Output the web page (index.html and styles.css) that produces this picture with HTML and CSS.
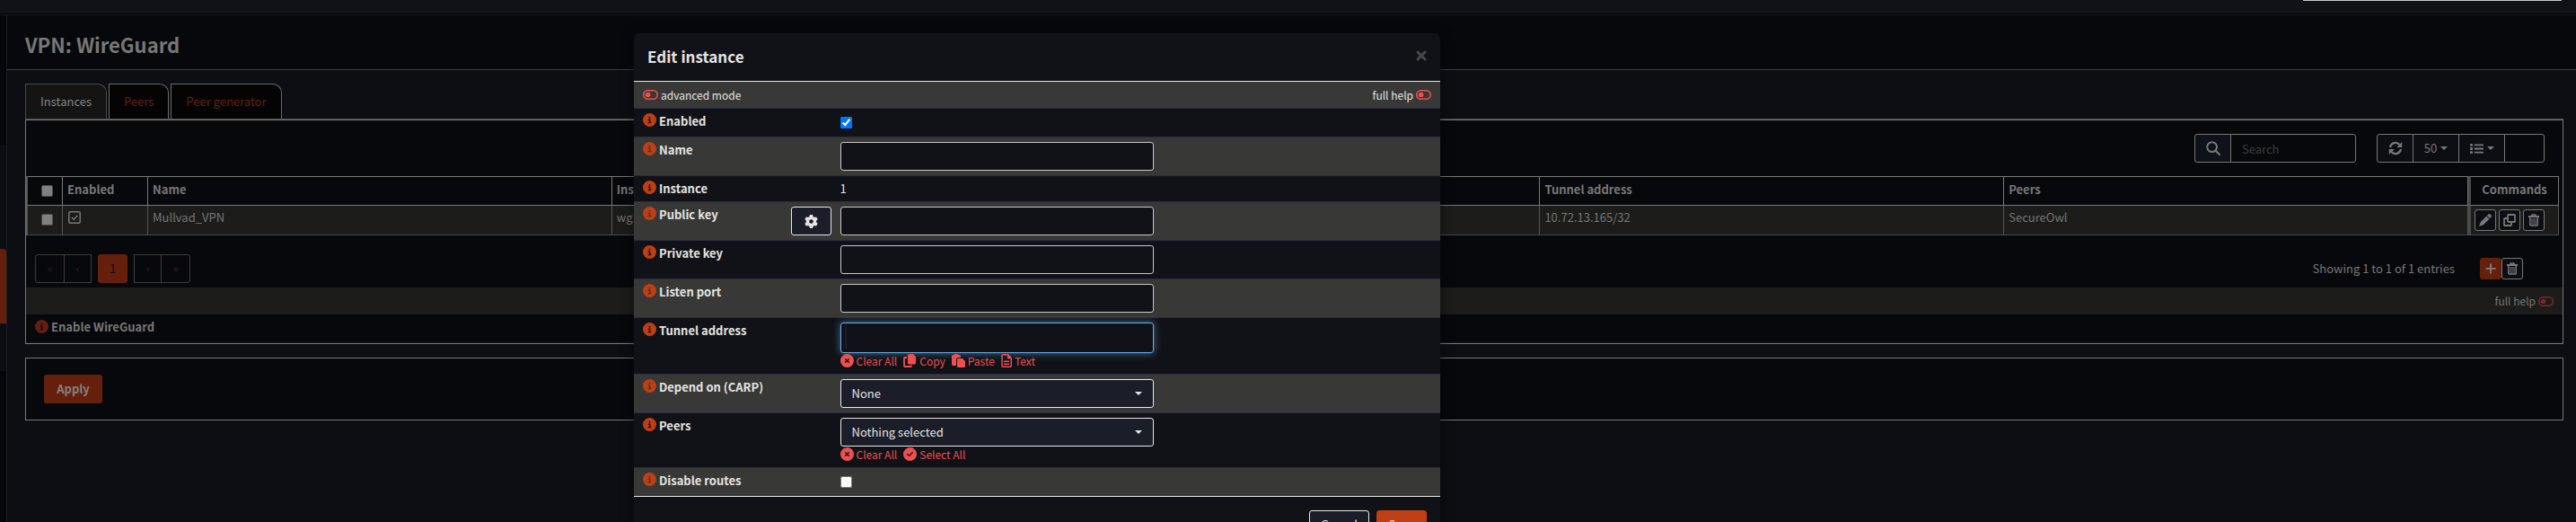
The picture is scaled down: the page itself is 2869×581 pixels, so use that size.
FILE: index.html
```html
<!DOCTYPE html>
<html lang="en">
<head>
<meta charset="utf-8">
<title>VPN: WireGuard</title>
<link rel="stylesheet" href="styles.css">
</head>
<body>
<svg class="sprite" aria-hidden="true">
  <symbol id="info" viewBox="0 0 512 512"><path d="M256 512A256 256 0 1 0 256 0a256 256 0 1 0 0 512zM216 336h24V272H216c-13.3 0-24-10.7-24-24s10.7-24 24-24h48c13.3 0 24 10.7 24 24v88h8c13.3 0 24 10.7 24 24s-10.7 24-24 24H216c-13.3 0-24-10.7-24-24s10.7-24 24-24zm40-208a32 32 0 1 1 0 64 32 32 0 1 1 0-64z"/></symbol>
  <symbol id="xmark" viewBox="0 0 512 512"><path d="M256 512A256 256 0 1 0 256 0a256 256 0 1 0 0 512zM175 175c9.4-9.4 24.6-9.4 33.9 0l47 47 47-47c9.4-9.4 24.6-9.4 33.9 0s9.4 24.6 0 33.9l-47 47 47 47c9.4 9.4 9.4 24.6 0 33.9s-24.6 9.4-33.9 0l-47-47-47 47c-9.4 9.4-24.6 9.4-33.9 0s-9.4-24.6 0-33.9l47-47-47-47c-9.4-9.4-9.4-24.6 0-33.9z"/></symbol>
  <symbol id="check" viewBox="0 0 512 512"><path d="M256 512A256 256 0 1 0 256 0a256 256 0 1 0 0 512zM369 209L241 337c-9.4 9.4-24.6 9.4-33.9 0l-64-64c-9.4-9.4-9.4-24.6 0-33.9s24.6-9.4 33.9 0l47 47L335 175c9.4-9.4 24.6-9.4 33.9 0s9.4 24.6 0 33.9z"/></symbol>
  <symbol id="gear" viewBox="0 0 512 512"><path d="M495.9 166.6c3.2 8.7 .5 18.4-6.4 24.6l-43.3 39.4c1.1 8.3 1.7 16.8 1.7 25.4s-.6 17.1-1.7 25.4l43.3 39.4c6.9 6.2 9.6 15.9 6.4 24.6c-4.4 11.9-9.7 23.3-15.8 34.3l-4.7 8.1c-6.6 11-14 21.4-22.1 31.2c-5.9 7.2-15.7 9.6-24.5 6.8l-55.7-17.7c-13.4 10.3-28.2 18.9-44 25.4l-12.5 57.1c-2 9.1-9 16.3-18.2 17.8c-13.8 2.3-28 3.5-42.5 3.5s-28.7-1.2-42.5-3.5c-9.2-1.5-16.2-8.7-18.2-17.8l-12.5-57.1c-15.8-6.5-30.6-15.1-44-25.4L83.1 425.9c-8.8 2.8-18.6 .3-24.5-6.8c-8.1-9.8-15.5-20.2-22.1-31.2l-4.7-8.1c-6.1-11-11.4-22.4-15.8-34.3c-3.2-8.7-.5-18.4 6.4-24.6l43.3-39.4C64.6 273.1 64 264.6 64 256s.6-17.1 1.7-25.4L22.4 191.2c-6.9-6.2-9.6-15.9-6.4-24.6c4.4-11.9 9.7-23.3 15.8-34.3l4.7-8.1c6.6-11 14-21.4 22.1-31.2c5.9-7.2 15.7-9.6 24.5-6.8l55.7 17.7c13.4-10.3 28.2-18.9 44-25.4l12.5-57.1c2-9.1 9-16.3 18.2-17.8C227.3 1.2 241.5 0 256 0s28.7 1.2 42.5 3.5c9.2 1.5 16.2 8.7 18.2 17.8l12.5 57.1c15.8 6.5 30.6 15.1 44 25.4l55.7-17.7c8.8-2.8 18.6-.3 24.5 6.8c8.1 9.8 15.5 20.2 22.1 31.2l4.7 8.1c6.1 11 11.4 22.4 15.8 34.3zM256 336a80 80 0 1 0 0-160 80 80 0 1 0 0 160z"/></symbol>
  <symbol id="toggle" viewBox="0 0 17 11"><rect x="0.8" y="0.8" width="15.4" height="9.4" rx="4.7" fill="none" stroke="currentColor" stroke-width="1.6"/><circle cx="5.6" cy="5.5" r="2.8"/></symbol>
  <symbol id="copy" viewBox="0 0 15 15"><path d="M6.5 0H11l3 3v7a1.5 1.5 0 0 1-1.500 1.500h-6A1.500 1.500 0 0 1 5 10V1.500A1.500 1.500 0 0 1 6.500 0z"/><path d="M4 4H1.800a.8.8 0 0 0-.8.8v8.400a.8.8 0 0 0 .8.8h6.400a.8.8 0 0 0 .8-.8V12.500" fill="none" stroke="currentColor" stroke-width="1.800"/></symbol>
  <symbol id="paste" viewBox="0 0 15 15"><path d="M1.500 1H3a2 2 0 0 1 4 0h1.500A1.500 1.500 0 0 1 10 2.500V4H7a2 2 0 0 0-2 2v7H1.500A1.500 1.500 0 0 1 0 11.500v-9A1.500 1.500 0 0 1 1.500 1z"/><path d="M7.300 5H12l3 3v5.500a1.500 1.500 0 0 1-1.500 1.500H7.300A1.300 1.300 0 0 1 6 13.700V6.300A1.300 1.300 0 0 1 7.300 5z"/></symbol>
  <symbol id="file" viewBox="0 0 12 15"><path d="M2 .8h5.500l3.700 3.700v8.700a1 1 0 0 1-1 1H2a1 1 0 0 1-1-1V1.800a1 1 0 0 1 1-1z" fill="none" stroke="currentColor" stroke-width="1.500"/><path d="M7 .8h1l3.500 3.500v1H7zM3 7.500h6V9H3zM3 10.500h6V12H3z"/></symbol>
  <symbol id="search" viewBox="0 0 16 16"><circle cx="6.600" cy="6.600" r="5.400" fill="none" stroke="currentColor" stroke-width="2"/><path d="M10.500 10.500l4.500 4.500" stroke="currentColor" stroke-width="2.200" stroke-linecap="round"/></symbol>
  <symbol id="refresh" viewBox="0 0 16 16"><path d="M2 7a6 6 0 0 1 10.600-2.800M14 9a6 6 0 0 1-10.600 2.800" fill="none" stroke="currentColor" stroke-width="2.200"/><path d="M15.200 1v6H9.200zM.8 15V9h6z"/></symbol>
  <symbol id="list" viewBox="0 0 16 14"><path d="M0 1h3v3H0zM5 1.500h11v2H5zM0 5.500h3v3H0zM5 6h11v2H5zM0 10h3v3H0zM5 10.500h11v2H5z"/></symbol>
  <symbol id="pencil" viewBox="0 0 14 14"><path d="M10.300.6a1.500 1.500 0 0 1 2.100 0l1 1a1.500 1.500 0 0 1 0 2.100l-1.300 1.300-3.100-3.100zM8.300 2.600l3.100 3.100-6.500 6.500L0 14l1.800-4.900z"/></symbol>
  <symbol id="clone" viewBox="0 0 14 14"><path d="M5.800 1h6.400a.8.8 0 0 1 .8.8v6.400a.8.8 0 0 1-.8.8H5.800a.8.8 0 0 1-.8-.8V1.800a.8.8 0 0 1 .8-.8zM4.500 5H1.800a.8.8 0 0 0-.8.8v6.400a.8.8 0 0 0 .8.8h6.400a.8.8 0 0 0 .8-.8V9.500" fill="none" stroke="currentColor" stroke-width="1.800"/></symbol>
  <symbol id="trash" viewBox="0 0 12 14"><path d="M1.800 3.500v8.700a.9.9 0 0 0 .9.9h6.600a.9.9 0 0 0 .9-.9V3.500M3.500 2.500L4.200.9h3.600l.7 1.600" fill="none" stroke="currentColor" stroke-width="1.500"/><path d="M0 2h12v2H0zM3.500 5h1v7h-1zM5.500 5h1v7h-1zM7.500 5h1v7h-1z"/></symbol>
  <symbol id="tick" viewBox="0 0 14 14"><rect x=".8" y=".8" width="12.400" height="12.400" rx="1.500" fill="none" stroke="currentColor" stroke-width="1.500"/><path d="M4 7l2.200 2.200L10.200 5" fill="none" stroke="currentColor" stroke-width="1.600"/></symbol>
  <symbol id="plus" viewBox="0 0 12 12"><path d="M5 .5h2V5h4.500v2H7v4.500H5V7H.5V5H5z"/></symbol>
  <symbol id="close" viewBox="0 0 12 12"><path d="M2 2l8 8M10 2l-8 8" stroke="currentColor" stroke-width="3" stroke-linecap="round"/></symbol>
</svg>

<header class="topbar"><div class="topbar-search"></div></header>
<div class="layout">
  <nav class="sidebar"><span class="side-group"></span><span class="side-active"></span><span class="side-rest"></span></nav>
  <main class="page">
    <div class="page-head"><h1>VPN: WireGuard</h1></div>
    <div class="content">
      <nav class="tabs">
        <a class="tab tab-on" href="#instances">Instances</a>
        <a class="tab" href="#peers">Peers</a>
        <a class="tab" href="#generator">Peer generator</a>
      </nav>
      <section class="box">
        <div class="toolbar">
          <div class="group">
            <span class="addon"><svg class="i16"><use href="#search"/></svg></span>
            <input class="search" type="text" placeholder="Search" aria-label="Search">
          </div>
          <div class="group">
            <button class="tool tool-s" aria-label="Refresh"><svg class="i16"><use href="#refresh"/></svg></button>
            <button class="tool tool-m">50<span class="caret"></span></button>
            <button class="tool tool-m" aria-label="Columns"><svg class="list"><use href="#list"/></svg><span class="caret"></span></button>
            <button class="tool tool-l" aria-label="More"></button>
          </div>
        </div>
        <table class="grid">
          <thead><tr>
            <th class="c-pick"><input class="pick" type="checkbox" aria-label="Select all rows"></th>
            <th class="c-on">Enabled</th><th>Name</th><th>Instance</th><th>Device</th><th>Tunnel address</th><th>Peers</th>
            <th class="c-cmd">Commands</th>
          </tr></thead>
          <tbody><tr>
            <td class="c-pick"><input class="pick" type="checkbox" aria-label="Select row"></td>
            <td><svg class="i14"><use href="#tick"/></svg></td><td>Mullvad_VPN</td><td>wg1</td><td></td><td>10.72.13.165/32</td><td>SecureOwl</td>
            <td class="c-cmd"><div class="cmds">
              <button class="mini" aria-label="Edit"><svg class="i14"><use href="#pencil"/></svg></button>
              <button class="mini" aria-label="Clone"><svg class="i14"><use href="#clone"/></svg></button>
              <button class="mini" aria-label="Delete"><svg class="trash"><use href="#trash"/></svg></button>
            </div></td>
          </tr></tbody>
        </table>
        <div class="foot">
          <div class="pager">
            <div class="group"><button class="pg pg-w">«</button><button class="pg">‹</button></div>
            <button class="pg pg-on">1</button>
            <div class="group"><button class="pg">›</button><button class="pg pg-w">»</button></div>
          </div>
          <div class="foot-right">
            <span>Showing 1 to 1 of 1 entries</span>
            <div class="adds">
              <button class="mini add" aria-label="Add"><svg class="i12"><use href="#plus"/></svg></button>
              <button class="mini" aria-label="Delete selected"><svg class="trash"><use href="#trash"/></svg></button>
            </div>
          </div>
        </div>
        <div class="band band-end"><small>full help</small><svg class="toggle"><use href="#toggle"/></svg></div>
        <div class="enable"><svg class="info"><use href="#info"/></svg><b>Enable WireGuard</b></div>
      </section>
      <section class="box apply-box"><button class="apply">Apply</button></section>
    </div>
  </main>
</div>

<form class="modal" role="dialog" aria-label="Edit instance">
  <div class="modal-head"><h2>Edit instance</h2><button class="close" type="button" aria-label="Close"><svg class="i12"><use href="#close"/></svg></button></div>
  <div class="row row-top">
    <span class="mode"><svg class="toggle"><use href="#toggle"/></svg><small>advanced mode</small></span>
    <span class="mode"><small>full help</small><svg class="toggle"><use href="#toggle"/></svg></span>
  </div>
  <div class="row">
    <div class="cell"><svg class="info"><use href="#info"/></svg><label for="f-on">Enabled</label></div>
    <div class="cell"><input class="tickbox" id="f-on" type="checkbox" checked></div>
  </div>
  <div class="row odd">
    <div class="cell"><svg class="info"><use href="#info"/></svg><label for="f-name">Name</label></div>
    <div class="cell"><input class="field" id="f-name" type="text"></div>
  </div>
  <div class="row">
    <div class="cell"><svg class="info"><use href="#info"/></svg><label>Instance</label></div>
    <div class="cell"><span class="value">1</span></div>
  </div>
  <div class="row odd">
    <div class="cell"><svg class="info"><use href="#info"/></svg><label for="f-pub">Public key</label><button class="gear" type="button" aria-label="Generate keypair"><svg class="i15"><use href="#gear"/></svg></button></div>
    <div class="cell"><input class="field" id="f-pub" type="text"></div>
  </div>
  <div class="row">
    <div class="cell"><svg class="info"><use href="#info"/></svg><label for="f-priv">Private key</label></div>
    <div class="cell"><input class="field" id="f-priv" type="text"></div>
  </div>
  <div class="row odd">
    <div class="cell"><svg class="info"><use href="#info"/></svg><label for="f-port">Listen port</label></div>
    <div class="cell"><input class="field" id="f-port" type="text"></div>
  </div>
  <div class="row">
    <div class="cell"><svg class="info"><use href="#info"/></svg><label for="f-tun">Tunnel address</label></div>
    <div class="cell stack">
      <div class="tokens"><input id="f-tun" type="text"></div>
      <div class="links">
        <a href="#clear"><svg class="i15"><use href="#xmark"/></svg>Clear All</a>
        <a href="#copy-all"><svg class="i15"><use href="#copy"/></svg>Copy</a>
        <a href="#paste-all"><svg class="i15"><use href="#paste"/></svg>Paste</a>
        <a href="#text"><svg class="file"><use href="#file"/></svg>Text</a>
      </div>
    </div>
  </div>
  <div class="row odd">
    <div class="cell"><svg class="info"><use href="#info"/></svg><label for="f-carp">Depend on (CARP)</label></div>
    <div class="cell"><div class="pickwrap"><select class="select" id="f-carp"><option>None</option></select></div></div>
  </div>
  <div class="row">
    <div class="cell"><svg class="info"><use href="#info"/></svg><label for="f-peers">Peers</label></div>
    <div class="cell stack">
      <div class="pickwrap"><select class="select" id="f-peers"><option>Nothing selected</option></select></div>
      <div class="links">
        <a href="#clear-peers"><svg class="i15"><use href="#xmark"/></svg>Clear All</a>
        <a href="#all-peers"><svg class="i15"><use href="#check"/></svg>Select All</a>
      </div>
    </div>
  </div>
  <div class="row odd">
    <div class="cell"><svg class="info"><use href="#info"/></svg><label for="f-routes">Disable routes</label></div>
    <div class="cell"><input class="tickbox" id="f-routes" type="checkbox"></div>
  </div>
  <div class="modal-foot"><button class="btn" type="button">Cancel</button><button class="btn btn-save" type="button">Save</button></div>
</form>
</body>
</html>
```

FILE: styles.css
```css
* { box-sizing: border-box; }
html, body { height: 100%; }
body {
  margin: 0; overflow: hidden; position: relative;
  display: flex; flex-direction: column;
  background: #0d0e13; color: #777776;
  font: 13px/20px "Noto Sans CJK SC", "Noto Sans", sans-serif;
}
button, input, select { font: inherit; color: inherit; margin: 0; border-radius: 3px; }
button { padding: 0; display: inline-flex; align-items: center; justify-content: center; }
h1, h2 { margin: 0; }
a { text-decoration: none; }
small { font-size: 12px; }
svg { fill: currentColor; flex: none; display: block; }
.sprite { position: absolute; width: 0; height: 0; }
.i16 { width: 16px; height: 16px; }
.i15 { width: 15px; height: 15px; }
.i14 { width: 14px; height: 14px; }
.i12 { width: 12px; height: 12px; }
.list { width: 15px; height: 13px; }
.trash { width: 12px; height: 14px; }
.file { width: 12px; height: 15px; }
.toggle { width: 17px; height: 11px; color: #ef4f50; }
.info { width: 15px; height: 15px; color: #c03e14; }

.topbar { height: 17px; flex: none; background: #111217; border-bottom: 1px solid #181922; box-shadow: inset 0 -1px #000; display: flex; justify-content: flex-end; padding-right: 16px; }
.topbar-search { width: 288px; height: 1px; background: #c4c8c8; }
.layout { display: flex; flex: 1; min-height: 0; }
.sidebar { width: 8px; flex: none; display: flex; flex-direction: column; border-right: 1px solid #1a1b23; background: #050609; padding-top: 144px; }
.side-group { height: 116px; background: #0c0d12; }
.side-active { height: 83px; background: #65200c; border-top-right-radius: 3px; }
.side-rest { height: 53px; background: #0c0d12; }
.page { flex: 1; min-width: 0; }
.page-head { height: 61px; padding: 16px 20px; background: #07080c; border-bottom: 1px solid #3c3c3e; }
h1 { font-size: 22px; line-height: 32px; font-weight: 700; }
.content { padding: 15px 14px 0 20px; }

.tabs { display: flex; gap: 2px; height: 39px; }
.tab { padding: 9px 16px; border: 1px solid #6b6b6b; border-bottom: 0; border-radius: 0 10px 0 0; background: #040404; color: #65200c; }
.tab-on { background: #141414; border-color: #484848; color: #858585; }
.box { border: 1px solid #777776; background: #07080c; }
.tabs + .box { box-shadow: 0 -1px #4a4a4a; margin-top: 1px; }

.toolbar { display: flex; justify-content: flex-end; gap: 23px; padding: 15px 20px; }
.group { display: flex; }
.addon { width: 41px; height: 32px; display: grid; place-items: center; border: 1px solid #777776; border-radius: 3px 0 0 3px; background: #10121a; }
.search { width: 140px; height: 32px; margin-left: -1px; padding: 0 12px; border: 1px solid #777776; border-radius: 0 3px 3px 0; background: #07080c; }
.search::placeholder { color: #3e3d3b; opacity: 1; }
.tool { height: 32px; border: 1px solid #777776; background: #0d0e14; border-radius: 0; gap: 4px; }
.tool + .tool { margin-left: -1px; }
.tool:first-child { border-radius: 3px 0 0 3px; }
.tool:last-child { border-radius: 0 3px 3px 0; }
.tool-s { width: 41px; }
.tool-m { width: 52px; }
.tool-l { width: 45px; background: #07080c; }
.caret { border: 4px solid transparent; border-top-color: currentColor; border-bottom: 0; }

.grid { width: calc(100% - 4px); table-layout: fixed; border-collapse: separate; border-spacing: 0; border-left: 2px solid #555; }
.grid th, .grid td { text-align: left; vertical-align: top; padding: 5px; border-right: 1px solid #555; }
.grid th { height: 33px; padding-top: 4px; border-top: 1px solid #777776; border-bottom: 1px solid #777776; border-right-color: #777776; }
.grid td { height: 33px; padding-top: 3px; border-bottom: 1px solid #484848; background: #1c1c1b; }
.grid td svg.i14 { margin: 3px 1px; }
.grid .c-pick { width: 39px; padding: 9px 0 0 5px; text-align: center; }
.c-on { width: 95px; }
.grid .c-cmd { width: 101px; border-left: 3px solid #484848; text-align: center; }
.grid td.c-cmd { padding: 4px; }
.pick { width: 13px; height: 13px; appearance: none; background: #808080; border: 1px solid #4a4a4a; border-radius: 2px; display: inline-block; vertical-align: top; }
.cmds { display: flex; gap: 3px; }
.mini { width: 24px; height: 24px; border: 1px solid #777776; background: #0d0e14; }
.mini .i14, .grid .mini svg.i14 { margin: 0; }
.add { background: #65200c; border-color: #65200c; }

.foot { display: flex; justify-content: space-between; align-items: center; padding: 21px 44px 5px 10px; }
.pager { display: flex; gap: 7px; }
.pg { width: 31px; height: 32px; border: 1px solid #3c3c3c; background: #07080c; color: #3d160b; border-radius: 0; }
.pg + .pg { margin-left: -1px; }
.pg-w { width: 33px; }
.pg-w:first-child { border-radius: 3px 0 0 3px; }
.pg-w:last-child { border-radius: 0 3px 3px 0; }
.pg-on { width: 33px; background: #65200c; border-color: #65200c; color: #0d0e14; border-radius: 3px; }
.foot-right { display: flex; align-items: center; gap: 28px; }
.adds { display: flex; }
.band { display: flex; align-items: center; height: 30px; background: #1c1c1b; }
.band-end { justify-content: flex-end; gap: 3px; padding-right: 10px; }
.band .toggle { color: #78282a; }
.enable { display: flex; align-items: center; gap: 3px; height: 32px; padding: 0 10px 4px; border-bottom: 1px solid #181922; }
.enable .info { color: #65200c; }
.apply-box { margin-top: 15px; padding: 18px 20px; }
.apply { width: 65px; height: 32px; border: 0; background: #65200c; font-weight: 700; display: flex; color: #85807d; }

.modal {
  position: absolute; top: 37px; left: 706px; width: 898px; z-index: 2;
  background: #111217; color: #e4e4e2; border-radius: 6px; box-shadow: 0 5px 15px rgba(0, 0, 0, .5);
}
.modal-head { display: flex; justify-content: space-between; align-items: flex-start; height: 54px; padding: 14px 15px; border-bottom: 1px solid #e8e8e8; }
h2 { font-size: 17px; line-height: 24px; font-weight: 700; }
.close { width: 12px; height: 12px; margin-top: 5px; background: none; border: 0; color: #48484b; }
.row { display: grid; grid-template-columns: 25% 40% 35%; border-top: 1px solid #2b2e42; }
.row.odd, .row-top { background: #383836; }
.row-top { display: flex; justify-content: space-between; align-items: center; height: 29px; padding: 0 10px; border: 0; }
.mode { display: flex; align-items: center; gap: 3px; }
.cell { display: flex; align-items: flex-start; gap: 3px; padding: 5px 5px 5px 10px; min-height: 28px; }
.cell + .cell { padding-left: 5px; }
.cell label { font-weight: 700; line-height: 18px; }
.value { line-height: 18px; }
.tickbox { width: 13px; height: 13px; margin: 4px 0; accent-color: #0075ff; }
.gear { width: 45px; height: 32px; margin-left: auto; border: 1px solid #e8e8e8; background: #1b1d29; }
.field { width: 100%; height: 32px; padding: 6px 12px; border: 1px solid #c8c8c8; background: #111217; }
.stack { flex-direction: column; gap: 1px; padding-bottom: 6px; }
.tokens { width: 100%; height: 34px; padding: 4px; border: 1px solid #66afe9; border-radius: 3px; box-shadow: 0 0 8px rgba(102, 175, 233, .6); }
.tokens input { display: block; width: 20px; height: 24px; padding: 0; border: 0; border-left: 2px solid #1b1d29; border-radius: 0; background: none; }
.links { display: flex; gap: 7px; height: 16px; font-size: 12px; line-height: 16px; color: #ef4f50; }
.links a { display: flex; gap: 3px; color: inherit; }
.pickwrap { position: relative; width: 100%; }
.pickwrap::after { content: ""; position: absolute; right: 13px; top: 14px; border: 4px solid transparent; border-top-color: #e4e4e2; border-bottom: 0; }
.select { display: block; width: 100%; height: 32px; padding: 0 12px; appearance: none; border: 1px solid #e8e8e8; background: #1b1d29; }
.modal-foot { display: flex; justify-content: flex-end; gap: 8px; padding: 15px; border-top: 1px solid #e8e8e8; }
.btn { min-width: 56px; height: 32px; padding: 0 12px; border: 1px solid #e8e8e8; background: #1b1d29; }
.btn-save { background: #c03e14; border-color: #c03e14; }
```
